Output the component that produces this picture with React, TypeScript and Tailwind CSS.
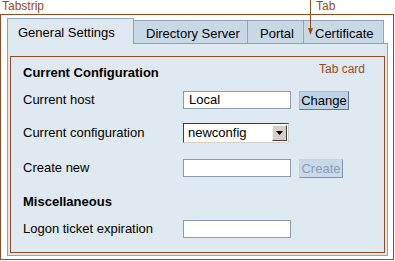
import React from "react";

const brown = "text-[#9a4a1f]";

function Tab({ label, active, w, pl }: { label: string; active?: boolean; w: string; pl: string }) {
  if (active) {
    return (
      <div
        className={`${w} ${pl} h-[26px] pt-[6px] border border-b-0 border-[#8ea4b8] bg-[#dde8f0] text-[13px] leading-[16px] text-black`}
      >
        {label}
      </div>
    );
  }
  return (
    <div
      className={`${w} ${pl} h-[24px] pt-[5px] border border-l-0 border-[#8ea4b8] bg-[#c8d8e5] text-[13px] leading-[16px] text-black`}
    >
      {label}
    </div>
  );
}

function TextBox({ value }: { value?: string }) {
  return (
    <div className="w-[108px] h-[18px] border border-[#8a9cad] bg-white pl-[5px] text-[13px] leading-[16px] text-black">
      {value}
    </div>
  );
}

function Row({ label, children }: { label: string; children: React.ReactNode }) {
  return (
    <div className="flex items-center h-[20px]">
      <div className="w-[160px] text-[13px] leading-[16px] text-black">{label}</div>
      {children}
    </div>
  );
}

export default function App() {
  return (
    <div className="relative w-[395px] h-[261px] bg-white font-['Liberation_Sans',Arial,sans-serif] overflow-hidden">
      <div className={`h-[14px] pl-[2px] text-[12px] leading-[13px] ${brown}`}>Tabstrip</div>

      {/* "Tab" pointer */}
      <div className={`absolute left-[316px] top-0 text-[12px] leading-[13px] ${brown}`}>Tab</div>
      <svg className="absolute z-20 left-[306px] top-0" width="10" height="38" viewBox="0 0 10 38">
        <line x1="4.5" y1="0" x2="4.5" y2="30" stroke="#9a4a1f" strokeWidth="1" />
        <path d="M2 28 L7 28 L4.5 35 Z" fill="#9a4a1f" />
      </svg>

      <div className="w-[394px] h-[246px] border border-[#9a4a1f] pt-[3px] pl-[6px]">
        <div className="relative z-10 flex items-end -mb-px">
          <Tab label="General Settings" active w="w-[127px]" pl="pl-[10px]" />
          <Tab label="Directory Server" w="w-[114px]" pl="pl-[12px]" />
          <Tab label="Portal" w="w-[56px]" pl="pl-[12px]" />
          <Tab label="Certificate" w="w-[80px]" pl="pl-[11px]" />
        </div>

        <div className="w-[381px] h-[213px] border border-[#8ea4b8] bg-[#dde8f0] flex flex-col pt-[12px] px-[2px] pb-[2px]">
          <div className="relative flex-1 border border-[#9a4a1f] bg-[#dfe9f1] pl-[12px] pt-[8px]">
            <div className={`absolute right-[19px] top-[5px] text-[12px] leading-[14px] ${brown}`}>Tab card</div>

            <div className="h-[16px] text-[13px] leading-[16px] font-bold text-black">Current Configuration</div>

            <div className="mt-[9px]">
              <Row label="Current host">
                <TextBox value="Local" />
                <button className="ml-[8px] w-[50px] h-[19px] border border-[#a9bccf] border-r-[#5f7890] border-b-[#5f7890] bg-[#bfd3e7] text-[13px] leading-[15px] text-black">
                  Change
                </button>
              </Row>
            </div>

            <div className="mt-[13px]">
              <Row label="Current configuration">
                <div className="flex items-center w-[106px] h-[20px] border border-[#404040] border-r-[#d4d0c8] border-b-[#d4d0c8] bg-white">
                  <div className="flex-1 pl-[4px] text-[13px] leading-[16px] text-black">newconfig</div>
                  <div className="w-[15px] h-[16px] mr-[1px] flex items-center justify-center bg-[#d4d0c8] border border-[#f4f4f4] border-r-[#404040] border-b-[#404040]">
                    <svg width="7" height="4" viewBox="0 0 7 4">
                      <path d="M0 0 L7 0 L3.5 4 Z" fill="#000" />
                    </svg>
                  </div>
                </div>
              </Row>
            </div>

            <div className="mt-[15px]">
              <Row label="Create new">
                <TextBox />
                <button className="ml-[8px] w-[44px] h-[19px] border border-[#c4d4e4] border-r-[#7f97ae] border-b-[#7f97ae] bg-[#c9d9ea] text-[13px] leading-[15px] text-[#8a9db2]">
                  Create
                </button>
              </Row>
            </div>

            <div className="mt-[16px] h-[16px] text-[13px] leading-[16px] font-bold text-black">Miscellaneous</div>

            <div className="mt-[9px]">
              <Row label="Logon ticket expiration">
                <TextBox />
              </Row>
            </div>
          </div>
        </div>
      </div>
    </div>
  );
}
